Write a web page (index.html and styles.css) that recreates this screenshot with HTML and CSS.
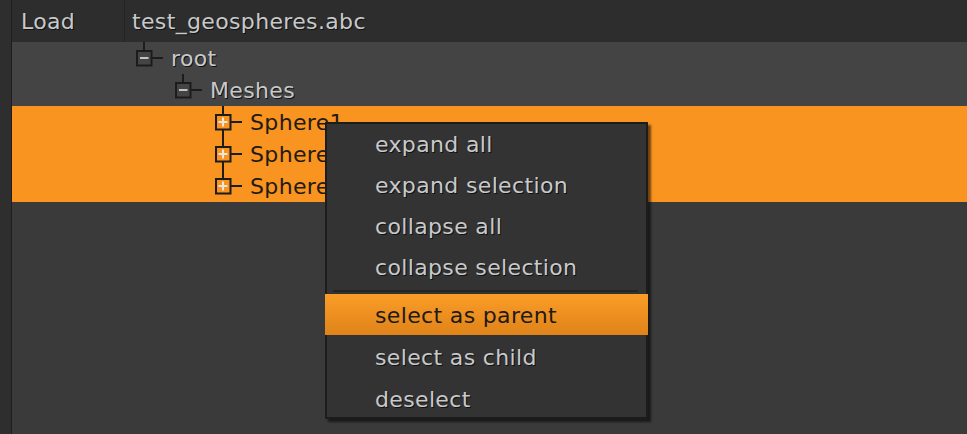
FILE: index.html
```html
<!DOCTYPE html>
<html>
<head>
<meta charset="utf-8">
<link rel="stylesheet" href="styles.css">
</head>
<body>
<div class="app">
  <div class="gutter"></div>
  <div class="panel">
    <div class="header">
      <div class="col-load">Load</div>
      <div class="col-file">test_geospheres.abc</div>
    </div>
    <div class="tree">
      <div class="row lvl0">
        <svg class="twig" width="35" height="32" viewBox="0 0 35 32"><rect x="7" y="0" width="2" height="8" fill="#1c1c1c"/><rect x="1" y="9" width="14.5" height="14.5" fill="none" stroke="#1c1c1c" stroke-width="2"/><rect x="16" y="15" width="11" height="2" fill="#1c1c1c"/><rect x="4" y="15" width="8.5" height="2" fill="#c4c4c4"/></svg>
        <span class="label">root</span>
      </div>
      <div class="row lvl1">
        <svg class="twig" width="35" height="32" viewBox="0 0 35 32"><rect x="7" y="0" width="2" height="8" fill="#1c1c1c"/><rect x="1" y="9" width="14.5" height="14.5" fill="none" stroke="#1c1c1c" stroke-width="2"/><rect x="16" y="15" width="11" height="2" fill="#1c1c1c"/><rect x="4" y="15" width="8.5" height="2" fill="#c4c4c4"/></svg>
        <span class="label">Meshes</span>
      </div>
      <div class="row lvl2 sel">
        <svg class="twig" width="35" height="32" viewBox="0 0 35 32"><rect x="7" y="0" width="2" height="32" fill="#1c1c1c"/><rect x="1" y="9" width="14.5" height="14.5" fill="#f8941f" stroke="#1c1c1c" stroke-width="2"/><rect x="16" y="15" width="11" height="2" fill="#1c1c1c"/><rect x="3.5" y="15" width="9" height="2" fill="#ece6dc"/><rect x="7" y="11.5" width="2" height="9" fill="#ece6dc"/></svg>
        <span class="label">Sphere1</span>
      </div>
      <div class="row lvl2 sel">
        <svg class="twig" width="35" height="32" viewBox="0 0 35 32"><rect x="7" y="0" width="2" height="32" fill="#1c1c1c"/><rect x="1" y="9" width="14.5" height="14.5" fill="#f8941f" stroke="#1c1c1c" stroke-width="2"/><rect x="16" y="15" width="11" height="2" fill="#1c1c1c"/><rect x="3.5" y="15" width="9" height="2" fill="#ece6dc"/><rect x="7" y="11.5" width="2" height="9" fill="#ece6dc"/></svg>
        <span class="label">Sphere2</span>
      </div>
      <div class="row lvl2 sel">
        <svg class="twig" width="35" height="32" viewBox="0 0 35 32"><rect x="7" y="0" width="2" height="8" fill="#1c1c1c"/><rect x="1" y="9" width="14.5" height="14.5" fill="#f8941f" stroke="#1c1c1c" stroke-width="2"/><rect x="16" y="15" width="11" height="2" fill="#1c1c1c"/><rect x="3.5" y="15" width="9" height="2" fill="#ece6dc"/><rect x="7" y="11.5" width="2" height="9" fill="#ece6dc"/></svg>
        <span class="label">Sphere3</span>
      </div>
    </div>
  </div>
</div>
<div class="menu">
  <div class="item">expand all</div>
  <div class="item">expand selection</div>
  <div class="item">collapse all</div>
  <div class="item">collapse selection</div>
  <div class="sep"></div>
  <div class="item active">select as parent</div>
  <div class="item shift1">select as child</div>
  <div class="item shift2">deselect</div>
</div>
</body>
</html>
```

FILE: styles.css
```css
html, body {
  margin: 0;
  padding: 0;
  height: 100%;
}
body {
  background: #3a3a3a;
  font-family: "DejaVu Sans", Verdana, sans-serif;
  font-size: 22px;
  letter-spacing: 0.35px;
  color: #c8c9ca;
  overflow: hidden;
}
.app {
  display: flex;
  height: 434px;
}
.gutter {
  width: 11px;
  background: #2e2e2e;
  border-right: 1px solid #1e1e1e;
  flex: none;
}
.panel {
  flex: 1;
  display: flex;
  flex-direction: column;
  background: #3a3a3a;
}
.header {
  display: flex;
  height: 42px;
  background: #2d2d2d;
  line-height: 40px;
  text-shadow: 1px 1px 0 #111;
}
.col-load {
  width: 113px;
  padding-left: 9px;
  box-sizing: border-box;
  border-right: 1px solid #242424;
  padding-top: 2px;
}
.col-file {
  padding-left: 7px;
  padding-top: 2px;
}
.tree {
  display: flex;
  flex-direction: column;
}
.row {
  display: flex;
  align-items: center;
  height: 32px;
  background: #444444;
}
.row.sel {
  background: #f8941f;
}
.lvl0 { padding-left: 124px; }
.lvl1 { padding-left: 163px; }
.lvl2 { padding-left: 203px; }
.twig {
  display: block;
  flex: none;
}
.label {
  line-height: 32px;
  padding-top: 2px;
  text-shadow: 1px 1px 0 #111;
}
.sel .label {
  color: #1f1a15;
  text-shadow: none;
}
.menu {
  position: absolute;
  left: 325px;
  top: 122px;
  width: 323px;
  box-sizing: border-box;
  background: #333333;
  border: 2px solid #1c1c1c;
  box-shadow: 3px 3px 2px rgba(0, 0, 0, 0.55);
}
.item {
  height: 41px;
  box-sizing: border-box;
  line-height: 42px;
  padding-left: 48px;
  white-space: nowrap;
  text-shadow: 1px 1px 0 #111;
}
.item.active {
  margin: 0 -2px;
  padding-left: 50px;
  padding-top: 1px;
  background: linear-gradient(#fa9d27, #e0831a);
  color: #1e1a16;
  text-shadow: none;
}
.item.shift1 {
  padding-top: 2px;
}
.item.shift2 {
  padding-top: 3px;
}
.sep {
  height: 2px;
  margin: 2px 8px 2px 6px;
  background: #242424;
}
```
